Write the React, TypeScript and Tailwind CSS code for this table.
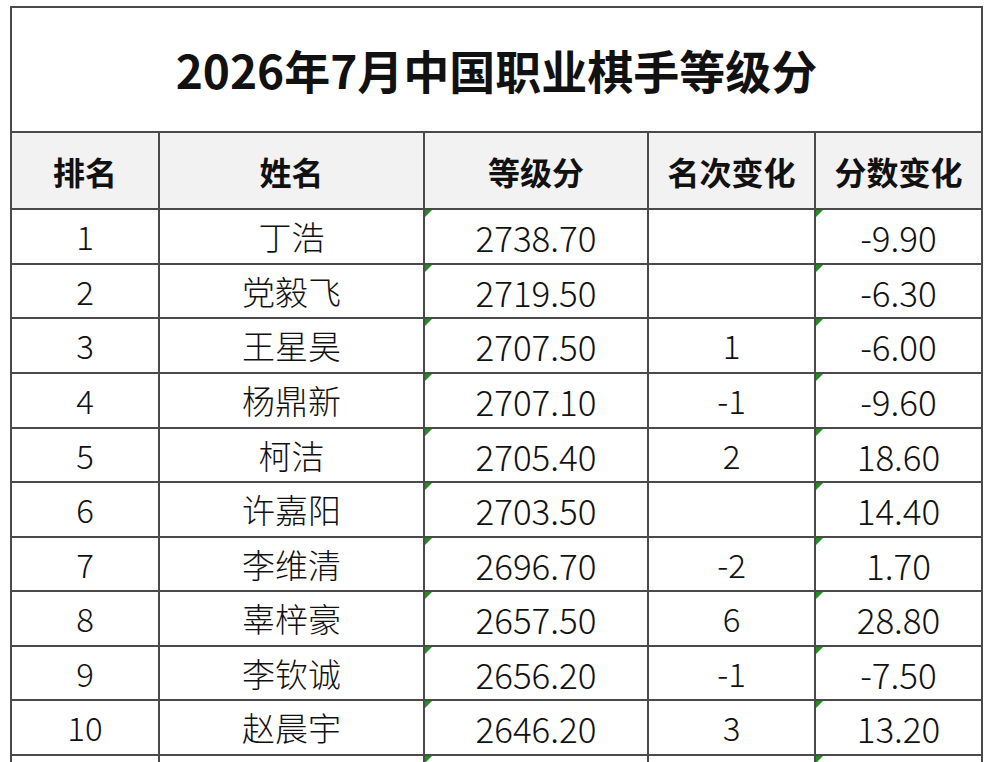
import type { ReactNode } from 'react'

type Row = {
  rank: string
  name: string
  score: string
  rankDelta: string
  scoreDelta: string
}

const rows: Row[] = [
  { rank: '1', name: '丁浩', score: '2738.70', rankDelta: '', scoreDelta: '-9.90' },
  { rank: '2', name: '党毅飞', score: '2719.50', rankDelta: '', scoreDelta: '-6.30' },
  { rank: '3', name: '王星昊', score: '2707.50', rankDelta: '1', scoreDelta: '-6.00' },
  { rank: '4', name: '杨鼎新', score: '2707.10', rankDelta: '-1', scoreDelta: '-9.60' },
  { rank: '5', name: '柯洁', score: '2705.40', rankDelta: '2', scoreDelta: '18.60' },
  { rank: '6', name: '许嘉阳', score: '2703.50', rankDelta: '', scoreDelta: '14.40' },
  { rank: '7', name: '李维清', score: '2696.70', rankDelta: '-2', scoreDelta: '1.70' },
  { rank: '8', name: '辜梓豪', score: '2657.50', rankDelta: '6', scoreDelta: '28.80' },
  { rank: '9', name: '李钦诚', score: '2656.20', rankDelta: '-1', scoreDelta: '-7.50' },
  { rank: '10', name: '赵晨宇', score: '2646.20', rankDelta: '3', scoreDelta: '13.20' },
]

// 55/54 alternating so the grid lines land where the sheet's do
const rowHeights = ['h-[55px]', 'h-[54px]', 'h-[55px]', 'h-[55px]', 'h-[54px]', 'h-[55px]', 'h-[54px]', 'h-[55px]', 'h-[54px]', 'h-[55px]', 'h-[55px]']

function Cell({
  children,
  mark = false,
  className = '',
}: {
  children?: ReactNode
  mark?: boolean
  className?: string
}) {
  return (
    <div
      className={`relative flex items-center justify-center border-r-2 border-b-2 border-[#4a4a4a] ${className}`}
    >
      {mark && (
        <span className="absolute left-0 top-0 h-0 w-0 border-t-[7px] border-r-[7px] border-t-[#1f8f1f] border-r-transparent" />
      )}
      {children}
    </div>
  )
}

export default function App() {
  return (
    <div
      className="min-h-screen bg-white pt-[6px] pl-[10px] text-[#111]"
      style={{ fontFamily: '"Noto Sans CJK SC", "Noto Sans", sans-serif' }}
    >
      <div className="grid w-[973px] grid-cols-[148px_265px_224px_167px_167px] border-l-2 border-t-2 border-[#4a4a4a]">
        <Cell className="col-span-5 h-[125px] text-[46px] font-bold leading-none">
          <span className="-mt-[2px]">2026年7月中国职业棋手等级分</span>
        </Cell>

        {['排名', '姓名', '等级分', '名次变化', '分数变化'].map((h) => (
          <Cell key={h} className="h-[77px] bg-[#f2f2f2] text-[32px] font-bold leading-none">
            {h}
          </Cell>
        ))}

        {rows.map((r, i) => (
          <div key={r.rank} className="contents text-[33px] font-light leading-none">
            <Cell className={rowHeights[i]}>{r.rank}</Cell>
            <Cell className={rowHeights[i]}>{r.name}</Cell>
            <Cell mark className={`${rowHeights[i]} text-[35px]`}>{r.score}</Cell>
            <Cell className={rowHeights[i]}>{r.rankDelta}</Cell>
            <Cell mark className={`${rowHeights[i]} text-[35px]`}>{r.scoreDelta}</Cell>
          </div>
        ))}

        <Cell className="h-[55px]" />
        <Cell className="h-[55px]" />
        <Cell mark className="h-[55px]" />
        <Cell className="h-[55px]" />
        <Cell mark className="h-[55px]" />
      </div>
    </div>
  )
}
